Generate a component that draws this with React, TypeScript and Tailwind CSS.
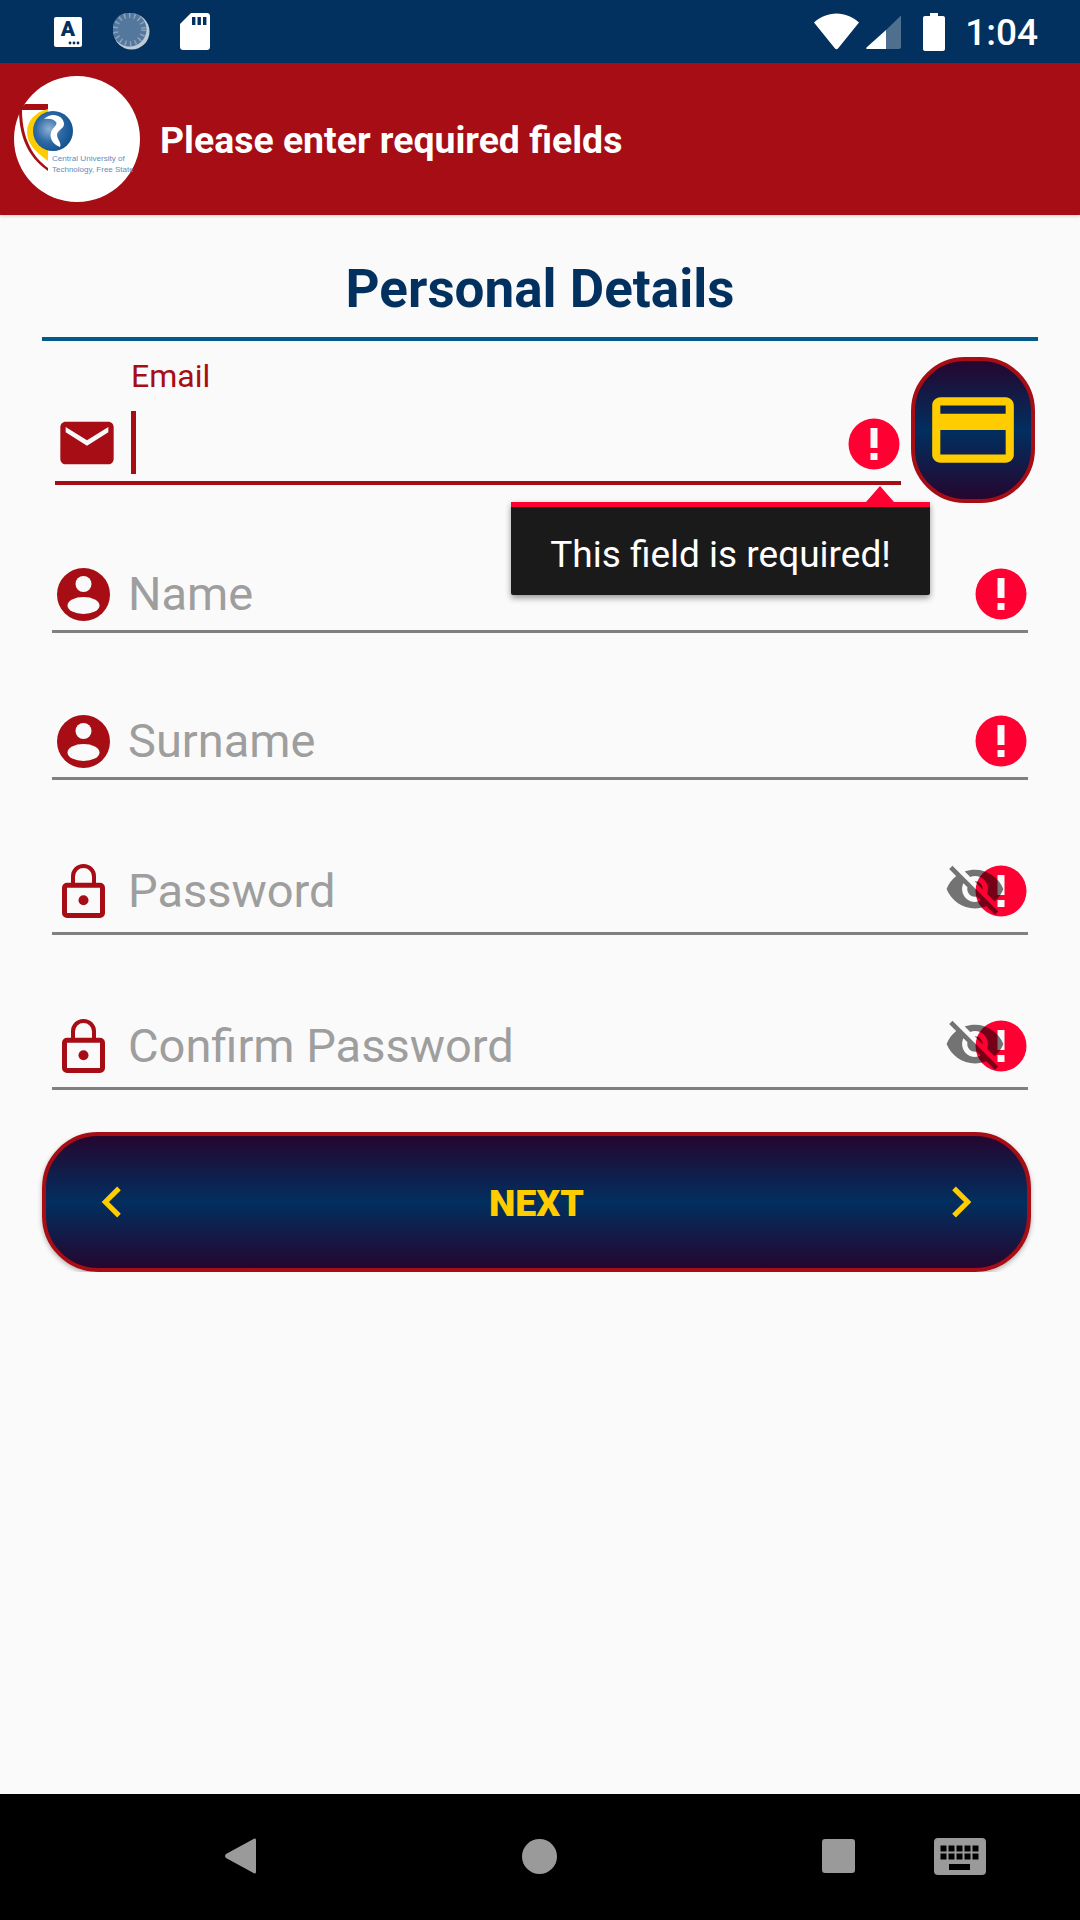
import React from "react";

const RED = "#a60d14";

function ErrorIcon() {
  return (
    <svg width="52" height="52" viewBox="0 0 52 52" className="shrink-0">
      <circle cx="26" cy="26" r="25.5" fill="#ff0033" />
      <rect x="22.5" y="10" width="7" height="20" fill="#fafafa" />
      <rect x="22.5" y="35" width="7" height="7" fill="#fafafa" />
    </svg>
  );
}

function PersonIcon() {
  return (
    <svg width="53" height="53" viewBox="0 0 53 53" className="shrink-0">
      <circle cx="26.5" cy="26.5" r="26.5" fill={RED} />
      <circle cx="26.5" cy="16" r="8" fill="#fafafa" />
      <ellipse cx="26.5" cy="37.5" rx="16" ry="8.5" fill="#fafafa" />
    </svg>
  );
}

function LockIcon() {
  return (
    <svg width="43" height="54" viewBox="0 0 43 54" className="shrink-0">
      <path
        d="M11 20V12.5C11 6.5 15.5 2 21.5 2S32 6.5 32 12.5V20"
        fill="none"
        stroke={RED}
        strokeWidth="4"
      />
      <rect x="2.5" y="21.2" width="38" height="30.3" rx="2.5" fill="none" stroke={RED} strokeWidth="5" />
      <circle cx="21.5" cy="36.3" r="5" fill={RED} />
    </svg>
  );
}

function EyeOff() {
  return (
    <svg width="62" height="62" viewBox="0 0 24 24" className="absolute left-[-31px] top-[-7px]" fill="#000000" fillOpacity="0.54">
      <path d="M12 7c2.76 0 5 2.24 5 5 0 .65-.13 1.26-.36 1.83l2.92 2.92c1.51-1.26 2.7-2.89 3.43-4.75-1.73-4.39-6-7.5-11-7.5-1.4 0-2.74.25-3.98.7l2.16 2.16C10.74 7.13 11.35 7 12 7zM2 4.27l2.28 2.28.46.46C3.08 8.3 1.78 10.02 1 12c1.73 4.39 6 7.5 11 7.5 1.55 0 3.03-.3 4.38-.84l.42.42L19.73 22 21 20.73 3.27 3 2 4.27zM7.53 9.8l1.55 1.55c-.05.21-.08.43-.08.65 0 1.66 1.34 3 3 3 .22 0 .44-.03.65-.08l1.55 1.55c-.67.33-1.41.53-2.2.53-2.76 0-5-2.24-5-5 0-.79.2-1.53.53-2.2zm4.31-.78l3.15 3.15.02-.16c0-1.66-1.34-3-3-3l-.17.01z" />
    </svg>
  );
}

function Field({
  icon,
  label,
  eye,
  className,
}: {
  icon: React.ReactNode;
  label: string;
  eye?: boolean;
  className: string;
}) {
  return (
    <div className={`ml-[52px] w-[976px] border-b-[3px] border-[#808080] flex items-center ${className}`}>
      <div className="w-[76px] pl-[5px] flex justify-center pr-[18px] shrink-0">{icon}</div>
      <span className="flex-1 text-[47px] leading-[52px] text-[#9e9e9e]">{label}</span>
      <div className="relative mr-[1px]">
        <ErrorIcon />
        {eye && <EyeOff />}
      </div>
    </div>
  );
}

function Logo() {
  return (
    <svg width="126" height="126" viewBox="0 0 126 126" className="shrink-0">
      <defs>
        <radialGradient id="lg" cx="0.4" cy="0.45" r="0.65">
          <stop offset="0" stopColor="#8fb2d4" />
          <stop offset="0.5" stopColor="#2f6aa6" />
          <stop offset="1" stopColor="#0d4c8c" />
        </radialGradient>
      </defs>
      <circle cx="63" cy="63" r="63" fill="#ffffff" />
      <path d="M11 28H34V95C18 84 5 66 5 34Z" fill={RED} />
      <path d="M8 34H34V92C20 82 8 64 8 34Z" fill="#ffffff" />
      <path d="M34 33C21 36 13 45 13 56C13 68 22 76 34 85V33Z" fill="#ffcc00" />
      <circle cx="39" cy="55" r="20" fill="url(#lg)" />
      <path d="M30 43C38 35 50 40 50 48C50 53 43 54 43 59C43 63 48 67 46 71C40 69 35 63 37 56C39 51 44 49 42 46C40 43 35 42 30 43Z" fill="#ffffff" />
      <text x="38" y="85" fontSize="8.1" fill="#5f8cbc" fontFamily="'Liberation Sans', sans-serif">Central University of</text>
      <text x="38" y="96" fontSize="8" fill="#5f8cbc" fontFamily="'Liberation Sans', sans-serif">Technology, Free State</text>
    </svg>
  );
}

export default function App() {
  return (
    <div className="w-[1080px] h-[1920px] flex flex-col bg-[#fafafa] overflow-hidden font-['Roboto',sans-serif]">
      {/* Status bar */}
      <div className="h-[63px] shrink-0 bg-[#03315f] flex items-center relative">
        <div className="ml-[54px] w-[28px] h-[30px] rounded-[2px] bg-white flex flex-col items-center relative">
          <span className="text-[21px] leading-[24px] font-black text-[#03315f]">A</span>
          <svg width="12" height="4" viewBox="0 0 12 4" className="absolute right-[2px] bottom-[2px]">
            <circle cx="2" cy="2" r="1.4" fill="#03315f" />
            <circle cx="6" cy="2" r="1.4" fill="#03315f" />
            <circle cx="10" cy="2" r="1.4" fill="#03315f" />
          </svg>
        </div>
        <svg width="37" height="37" viewBox="0 0 37 37" className="ml-[31px]">
          <circle cx="18.5" cy="18.5" r="18" fill="#ffffff" fillOpacity="0.75" />
          <circle cx="16.5" cy="16.5" r="17" fill="#54779d" />
          <circle cx="16.5" cy="16.5" r="14" fill="none" stroke="#8aa2bd" strokeWidth="5" strokeDasharray="1.5 3.5" />
        </svg>
        <svg width="30" height="37" viewBox="0 0 30 37" className="ml-[30px]">
          <path d="M11 0H27C28.7 0 30 1.3 30 3V34C30 35.7 28.7 37 27 37H3C1.3 37 0 35.7 0 34V11Z" fill="#ffffff" />
          <rect x="12" y="4" width="3.4" height="8" fill="#03315f" />
          <rect x="17.5" y="4" width="3.4" height="8" fill="#03315f" />
          <rect x="23" y="4" width="3.4" height="8" fill="#03315f" />
        </svg>
        <div className="ml-auto flex items-center">
          <svg width="45" height="37" viewBox="0 0 45 37">
            <path d="M0 9.5C6 4 14 0.5 22.5 0.5S39 4 45 9.5L24 35.5C23.2 36.5 21.8 36.5 21 35.5Z" fill="#ffffff" />
          </svg>
          <svg width="35" height="35" viewBox="0 0 35 35" className="ml-[7px]">
            <path d="M35 1.5V33C35 34 34 35 33 35H20V16Z" fill="#ffffff" fillOpacity="0.3" />
            <path d="M20 16V35H1C0 35 0 34 0.5 33.5Z" fill="#ffffff" />
          </svg>
          <svg width="22" height="38" viewBox="0 0 22 38" className="ml-[22px]">
            <path d="M7 0H15V3H20C21.1 3 22 3.9 22 5V36C22 37.1 21.1 38 20 38H2C0.9 38 0 37.1 0 36V5C0 3.9 0.9 3 2 3H7Z" fill="#ffffff" />
          </svg>
          <span className="ml-[20px] mr-[42px] pt-[3px] text-[37px] leading-[40px] font-medium text-white whitespace-nowrap">1:04</span>
        </div>
      </div>

      {/* Header */}
      <div className="h-[152px] shrink-0 bg-[#a60d14] flex items-center pl-[14px] gap-[20px] shadow-[0_1px_3px_rgba(0,0,0,0.2)] z-10">
        <Logo />
        <span className="pt-[2px] text-[37.4px] leading-[44px] font-bold text-white whitespace-nowrap">Please enter required fields</span>
      </div>

      {/* Content */}
      <div className="flex-1 relative">
        <div className="ml-[42px] w-[996px] h-[126px] border-b-[4px] border-[#005a8c] flex items-center justify-center pt-[26px]">
          <h1 className="text-[53px] leading-[60px] font-bold text-[#03315f]">Personal Details</h1>
        </div>

        {/* Email */}
        <div className="ml-[55px] w-[846px] h-[144px] border-b-[4px] border-[#a60d14] flex flex-col">
          <div className="pl-[76px] pt-[17px] h-[68px] text-[32px] leading-[36px] text-[#a60d14]">Email</div>
          <div className="flex items-center h-[66px]">
            <svg width="64" height="64" viewBox="0 0 24 24" fill={RED} className="shrink-0 mt-[2px]">
              <path d="M20 4H4c-1.1 0-1.99.9-1.99 2L2 18c0 1.1.9 2 2 2h16c1.1 0 2-.9 2-2V6c0-1.1-.9-2-2-2zm0 4l-8 5-8-5V6l8 5 8-5v2z" />
            </svg>
            <div className="ml-[12px] w-[5px] h-[63px] bg-[#a60d14]" />
            <div className="ml-auto mr-[1px] mt-[3px]">
              <ErrorIcon />
            </div>
          </div>
        </div>

        <Field icon={<PersonIcon />} label="Name" className="mt-[84px] h-[64px] pb-[11px]" />
        <Field icon={<PersonIcon />} label="Surname" className="mt-[83px] h-[64px] pb-[11px]" />
        <Field icon={<LockIcon />} label="Password" eye className="mt-[85px] h-[70px] pb-[15px]" />
        <Field icon={<LockIcon />} label="Confirm Password" eye className="mt-[85px] h-[70px] pb-[15px]" />

        {/* Next */}
        <div className="mt-[42px] ml-[34px] w-[1005px] h-[140px] px-[8px] overflow-hidden">
          <div className="h-[140px] rounded-[56px] border-[4px] border-[#a60d14] bg-[linear-gradient(180deg,#25062f_0%,#012f5f_50%,#25062f_100%)] shadow-[0_2px_5px_rgba(0,0,0,0.3)] flex items-center justify-between pl-[35px] pr-[35px]">
            <svg width="62" height="62" viewBox="0 0 24 24" fill="#ffcc00">
              <path d="M15.41 7.41L14 6l-6 6 6 6 1.41-1.41L10.83 12z" />
            </svg>
            <span className="text-[37.5px] leading-[40px] font-black text-[#ffcc00] pt-[2px]">NEXT</span>
            <svg width="62" height="62" viewBox="0 0 24 24" fill="#ffcc00">
              <path d="M10 6L8.59 7.41 13.17 12l-4.58 4.59L10 18l6-6z" />
            </svg>
          </div>
        </div>

        {/* Card button, overlapping the form */}
        <div className="absolute left-[911px] top-[142px] w-[124px] h-[146px] rounded-[54px] border-[4px] border-[#a60d14] bg-[linear-gradient(180deg,#25062f_0%,#012f5f_50%,#25062f_100%)] flex items-center justify-center">
          <svg width="98" height="98" viewBox="0 0 24 24" fill="#ffcc00">
            <path d="M20 4H4c-1.11 0-1.99.89-1.99 2L2 18c0 1.11.89 2 2 2h16c1.11 0 2-.89 2-2V6c0-1.11-.89-2-2-2zm0 14H4v-6h16v6zm0-10H4V6h16v2z" />
          </svg>
        </div>

        {/* Tooltip */}
        <div className="absolute left-[511px] top-[287px] w-[419px] h-[93px] bg-[#1a1a1a] border-t-[5px] border-[#ff0033] rounded-b-[2px] shadow-[0_3px_6px_rgba(0,0,0,0.4)] flex items-center justify-center">
          <div className="absolute right-[36px] top-[-21px] w-0 h-0 border-l-[14px] border-r-[14px] border-b-[16px] border-l-transparent border-r-transparent border-b-[#ff0033]" />
          <span className="pt-[8px] text-[37px] leading-[44px] text-white whitespace-nowrap">This field is required!</span>
        </div>
      </div>

      {/* Nav */}
      <div className="h-[126px] shrink-0 bg-black flex items-center relative">
        <svg width="31" height="36" viewBox="0 0 31 36" className="ml-[225px] mt-[-2px]">
          <path d="M29 0.8C30 0 31 0.8 31 2V34C31 35.2 30 36 29 35.2L1 20C-0.3 19 -0.3 17 1 16Z" fill="#9a9a9a" />
        </svg>
        <div className="ml-[266px] w-[35px] h-[35px] rounded-full bg-[#9a9a9a] mt-[-2px]" />
        <div className="ml-[265px] w-[33px] h-[34px] rounded-[3px] bg-[#9a9a9a] mt-[-2px]" />
        <svg width="52" height="37" viewBox="0 0 52 37" className="ml-[79px] mt-[-2px]">
          <rect width="52" height="37" rx="4" fill="#9a9a9a" />
          {[6.5, 14.5, 22.5, 30.5, 38.5].map((x) => (
            <g key={x} fill="#000000">
              <rect x={x} y="7.5" width="6" height="6" />
              <rect x={x} y="15.5" width="6" height="6" />
            </g>
          ))}
          <rect x="15" y="26" width="21" height="6" fill="#000000" />
        </svg>
      </div>
    </div>
  );
}
